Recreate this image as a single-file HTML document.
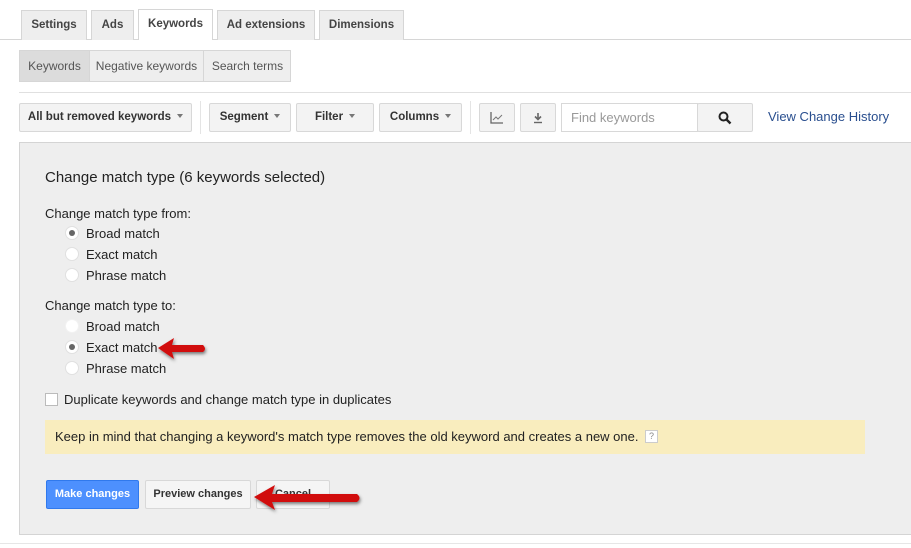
<!DOCTYPE html>
<html><head><style>
*{margin:0;padding:0;box-sizing:border-box}
body{width:911px;height:548px;background:#fff;font-family:"Liberation Sans",Arial,sans-serif;position:relative;overflow:hidden;color:#222}
.a{position:absolute}
.tab{position:absolute;top:10px;height:30px;border:1px solid #d6d6d6;border-bottom:none;background:#eeeeee;font-size:11.5px;font-weight:bold;color:#444;text-align:center;line-height:29px}
.btn{position:absolute;top:103px;height:29px;border:1px solid #d8d8d8;border-radius:2px;background:#f3f3f3;font-size:11.5px;font-weight:bold;color:#333;text-align:center;line-height:27px}
.car{display:inline-block;border-left:3.5px solid transparent;border-right:3.5px solid transparent;border-top:4px solid #777;vertical-align:middle;margin-left:6px;margin-top:-2px}
.lbl{position:absolute;font-size:13px;color:#222}
.rad{position:absolute;width:14px;height:14px;border-radius:50%;background:#fff;border:1px solid #e0e0e0}
.rad.on::after{content:"";position:absolute;left:3px;top:3px;width:6px;height:6px;border-radius:50%;background:#666}
</style></head><body>
<div class="a" style="left:0;top:39px;width:911px;height:1px;background:#d6d6d6"></div>
<div class="tab" style="left:21px;width:66px">Settings</div>
<div class="tab" style="left:91px;width:43px">Ads</div>
<div class="tab" style="left:138px;width:75px;top:9px;height:31px;background:#fff">Keywords</div>
<div class="tab" style="left:217px;width:98px">Ad extensions</div>
<div class="tab" style="left:319px;width:85px">Dimensions</div>

<div class="a" style="left:19px;top:50px;width:272px;height:32px;border:1px solid #d6d6d6;background:#eeeeee;font-size:12px;color:#555;line-height:30px">
<span class="a" style="left:0;width:70px;height:30px;background:#dcdcdc;text-align:center;border-right:1px solid #d6d6d6">Keywords</span>
<span class="a" style="left:70px;width:114px;text-align:center;border-right:1px solid #d6d6d6;height:30px">Negative keywords</span>
<span class="a" style="left:184px;width:87px;text-align:center">Search terms</span>
</div>
<div class="a" style="left:19px;top:92px;width:892px;height:1px;background:#e0e0e0"></div>

<div class="btn" style="left:19px;width:173px">All but removed keywords<span class="car"></span></div>
<div class="a" style="left:200px;top:101px;width:1px;height:33px;background:#e4e4e4"></div>
<div class="btn" style="left:209px;width:82px">Segment<span class="car"></span></div>
<div class="btn" style="left:296px;width:78px">Filter<span class="car"></span></div>
<div class="btn" style="left:379px;width:83px">Columns<span class="car"></span></div>
<div class="a" style="left:470px;top:101px;width:1px;height:33px;background:#e4e4e4"></div>
<div class="btn" style="left:479px;width:36px"><svg width="14" height="12" viewBox="0 0 14 12" style="margin-top:8px"><path d="M1 0V11H13" stroke="#666" fill="none" stroke-width="1.3"/><path d="M3 8L6 5L8 7L12 3" stroke="#777" fill="none" stroke-width="1"/></svg></div>
<div class="btn" style="left:520px;width:36px"><svg width="12" height="12" viewBox="0 0 12 12" style="margin-top:8px"><path d="M6 1V7M3 4.5L6 7.5L9 4.5" stroke="#666" fill="none" stroke-width="1.6"/><path d="M2 10.5H10" stroke="#666" stroke-width="1.4"/></svg></div>
<div class="a" style="left:561px;top:103px;width:137px;height:29px;border:1px solid #d8d8d8;background:#fff;font-size:13px;color:#999;line-height:27px;padding-left:9px">Find keywords</div>
<div class="btn" style="left:697px;width:56px"><svg width="14" height="14" viewBox="0 0 14 14" style="margin-top:7px"><circle cx="5.5" cy="5.5" r="4" stroke="#222" stroke-width="2" fill="none"/><path d="M8.5 8.5L12.5 12.5" stroke="#222" stroke-width="2.4"/></svg></div>
<div class="a" style="left:768px;top:109px;font-size:13px;color:#2a4f8f">View Change History</div>

<div class="a" style="left:19px;top:142px;width:900px;height:393px;background:#eeeeee;border:1px solid #d4d4d4"></div>
<div class="a" style="left:0;top:543px;width:911px;height:1px;background:#e6e6e6"></div>
<div class="a" style="left:45px;top:169px;font-size:15px;color:#222">Change match type (6 keywords selected)</div>
<div class="lbl" style="left:45px;top:206px">Change match type from:</div>
<div class="rad on" style="left:65px;top:226px"></div><div class="lbl" style="left:86px;top:226px">Broad match</div>
<div class="rad" style="left:65px;top:247px"></div><div class="lbl" style="left:86px;top:247px">Exact match</div>
<div class="rad" style="left:65px;top:268px"></div><div class="lbl" style="left:86px;top:268px">Phrase match</div>
<div class="lbl" style="left:45px;top:298px">Change match type to:</div>
<div class="rad" style="left:65px;top:319px;border-color:#f2f2f2"></div><div class="lbl" style="left:86px;top:319px">Broad match</div>
<div class="rad on" style="left:65px;top:340px"></div><div class="lbl" style="left:86px;top:340px">Exact match</div>
<div class="rad" style="left:65px;top:361px"></div><div class="lbl" style="left:86px;top:361px">Phrase match</div>
<div class="a" style="left:45px;top:393px;width:13px;height:13px;border:1px solid #bbb;background:#fff"></div>
<div class="lbl" style="left:64px;top:392px">Duplicate keywords and change match type in duplicates</div>
<div class="a" style="left:45px;top:420px;width:820px;height:34px;background:#f9edbe"></div>
<div class="lbl" style="left:55px;top:429px">Keep in mind that changing a keyword's match type removes the old keyword and creates a new one.</div>
<div class="a" style="left:645px;top:430px;width:13px;height:13px;border:1px solid #ccc;background:#fff;font-size:9px;color:#888;text-align:center;line-height:11px">?</div>

<div class="a" style="left:46px;top:480px;width:93px;height:29px;background:#4d90fe;border:1px solid #3079ed;border-radius:2px;color:#fff;font-size:11px;font-weight:bold;text-align:center;line-height:27px">Make changes</div>
<div class="a" style="left:145px;top:480px;width:106px;height:29px;background:#f5f5f5;border:1px solid #d8d8d8;border-radius:2px;color:#333;font-size:11px;font-weight:bold;text-align:center;line-height:27px">Preview changes</div>
<div class="a" style="left:256px;top:480px;width:74px;height:29px;background:#f5f5f5;border:1px solid #d8d8d8;border-radius:2px;color:#333;font-size:11px;font-weight:bold;text-align:center;line-height:27px">Cancel</div>

<svg class="a" style="left:0;top:0" width="911" height="548">
<defs><filter id="s" x="-20%" y="-50%" width="140%" height="200%"><feDropShadow dx="1" dy="2" stdDeviation="1.5" flood-color="#000" flood-opacity="0.5"/></filter></defs>
<g filter="url(#s)" fill="#d10f0f">
<path d="M158 348L174 338L172 345L203 345Q207 349 203 352L172 352L174 359Z"/>
<path d="M254 497L275 485L272 494L357 494Q362 498 357 502L272 502L275 510Z"/>
</g></svg>
</body></html>
